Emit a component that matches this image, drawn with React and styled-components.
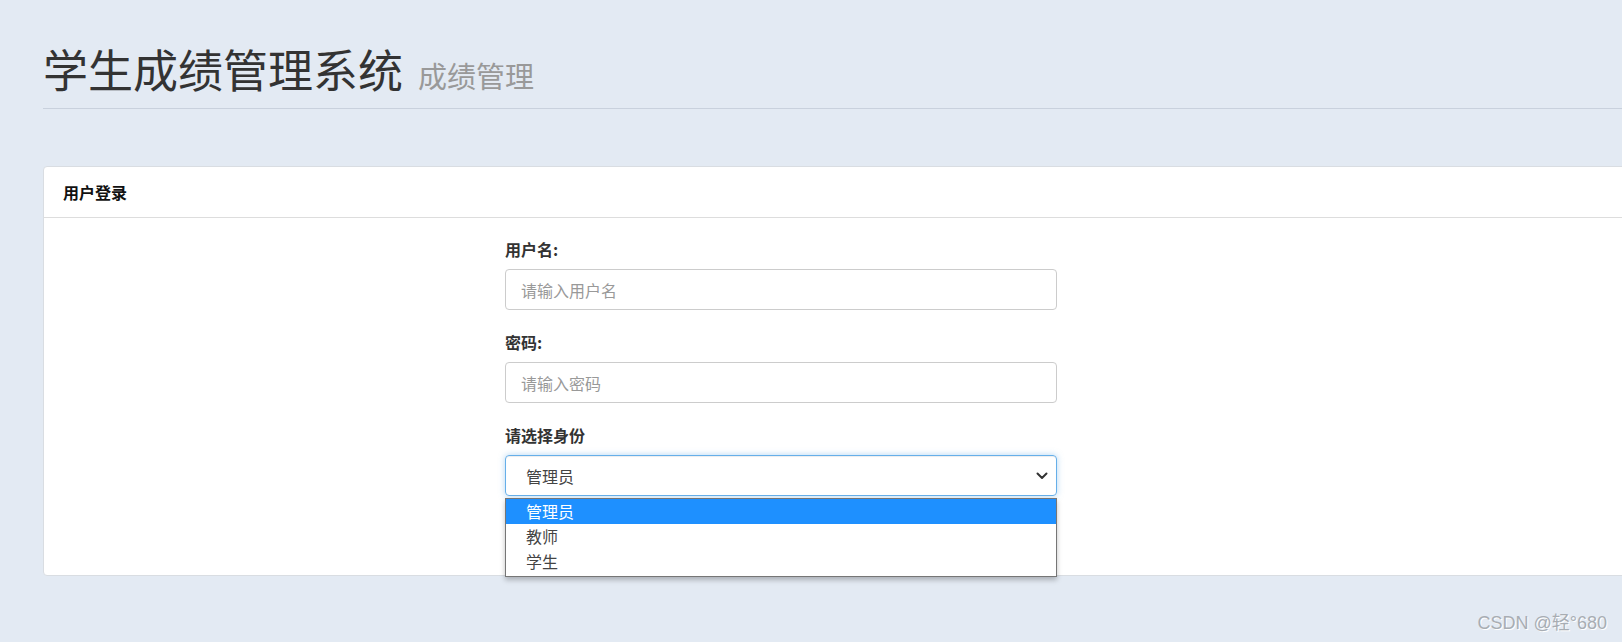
import styled, { createGlobalStyle } from "styled-components"

const GlobalStyle = createGlobalStyle`
    html, body {
        margin: 0;
        padding: 0;
        background: #e3eaf3;
        overflow: hidden;
        font-family: "Noto Sans CJK SC", "Noto Sans", sans-serif;
        color: #333;
    }
`

const Page = styled.div`
    padding-left: 43px;
    height: 642px;
    position: relative;
`
const Header = styled.div`
    padding-top: 42px;
    padding-bottom: 12px;
    border-bottom: 1px solid #c9d1dd;
    display: flex;
    align-items: baseline;
    gap: 15px;
`
const Title = styled.h1`
    margin: 0;
    font-size: 45px;
    font-weight: 400;
    line-height: 54px;
    color: #333;
`
const SubTitle = styled.small`
    font-size: 29px;
    color: #999;
    line-height: 1;
`
const Card = styled.div`
    margin-top: 57px;
    width: calc(100% + 20px);
    background: #fff;
    border: 1px solid #d9dde2;
    border-radius: 4px;
`
const CardHeader = styled.div`
    height: 50px;
    padding-left: 19px;
    display: flex;
    align-items: center;
    border-bottom: 1px solid #dddddd;
    font-size: 16px;
    font-weight: 700;
    color: #111;
`
const CardBody = styled.div`
    padding: 20px 0 79px 461px;
`
const Form = styled.div`
    width: 552px;
    display: flex;
    flex-direction: column;
    gap: 21px;
`
const Group = styled.div`
    display: flex;
    flex-direction: column;
    gap: 9px;
    position: relative;
`
const Label = styled.label`
    font-size: 16px;
    font-weight: 700;
    line-height: 22px;
    color: #333;
`
const Input = styled.input`
    box-sizing: border-box;
    height: 41px;
    width: 100%;
    padding: 0 15px;
    border: 1px solid #cccccc;
    border-radius: 4px;
    font-size: 16px;
    font-family: "Noto Sans CJK SC", "Noto Sans", sans-serif;
    color: #555;
    outline: none;
    &::placeholder { color: #999; }
`
const SelectBox = styled.div`
    box-sizing: border-box;
    height: 41px;
    padding: 0 8px 0 20px;
    display: flex;
    align-items: center;
    justify-content: space-between;
    border: 1px solid #66afe9;
    border-radius: 4px;
    box-shadow: inset 0 1px 1px rgba(0,0,0,.075), 0 0 6px rgba(102,175,233,.5);
    font-size: 16px;
    color: #444;
`
const DropList = styled.ul`
    position: absolute;
    left: 0;
    right: 0;
    top: calc(100% + 2px);
    margin: 0;
    padding: 0 0 2px;
    list-style: none;
    background: #fff;
    border: 1px solid #767676;
    box-shadow: 0 3px 5px rgba(0,0,0,.25);
    z-index: 2;
`
const Option = styled.li`
    height: 25px;
    line-height: 25px;
    padding-left: 20px;
    font-size: 16px;
    color: ${p => (p.$active ? "#fff" : "#444")};
    background: ${p => (p.$active ? "#1e90ff" : "transparent")};
`
const Watermark = styled.div`
    position: absolute;
    right: 15px;
    bottom: 8px;
    font-size: 18px;
    color: #a8adb3;
    text-shadow: 1px 1px 0 #fff;
    font-family: "Liberation Sans", "Noto Sans CJK SC", sans-serif;
`

const Chevron = () => (
    <svg width="12" height="8" viewBox="0 0 12 8">
        <path d="M1.5 1.5 L6 6 L10.5 1.5" fill="none" stroke="#333" strokeWidth="2" strokeLinecap="round" strokeLinejoin="round" />
    </svg>
)

const roles = ["管理员", "教师", "学生"]

const App = () => {
    return (<Page>
        <GlobalStyle />
        <Header>
            <Title>学生成绩管理系统</Title>
            <SubTitle>成绩管理</SubTitle>
        </Header>
        <Card>
            <CardHeader>用户登录</CardHeader>
            <CardBody>
                <Form>
                    <Group>
                        <Label>用户名:</Label>
                        <Input placeholder="请输入用户名" />
                    </Group>
                    <Group>
                        <Label>密码:</Label>
                        <Input type="password" placeholder="请输入密码" />
                    </Group>
                    <Group>
                        <Label>请选择身份</Label>
                        <SelectBox>
                            <span>管理员</span>
                            <Chevron />
                        </SelectBox>
                        <DropList>
                            {roles.map((r, i) => (
                                <Option key={r} $active={i === 0}>{r}</Option>
                            ))}
                        </DropList>
                    </Group>
                </Form>
            </CardBody>
        </Card>
        <Watermark>CSDN @轻°680</Watermark>
    </Page>)
}
export default App
